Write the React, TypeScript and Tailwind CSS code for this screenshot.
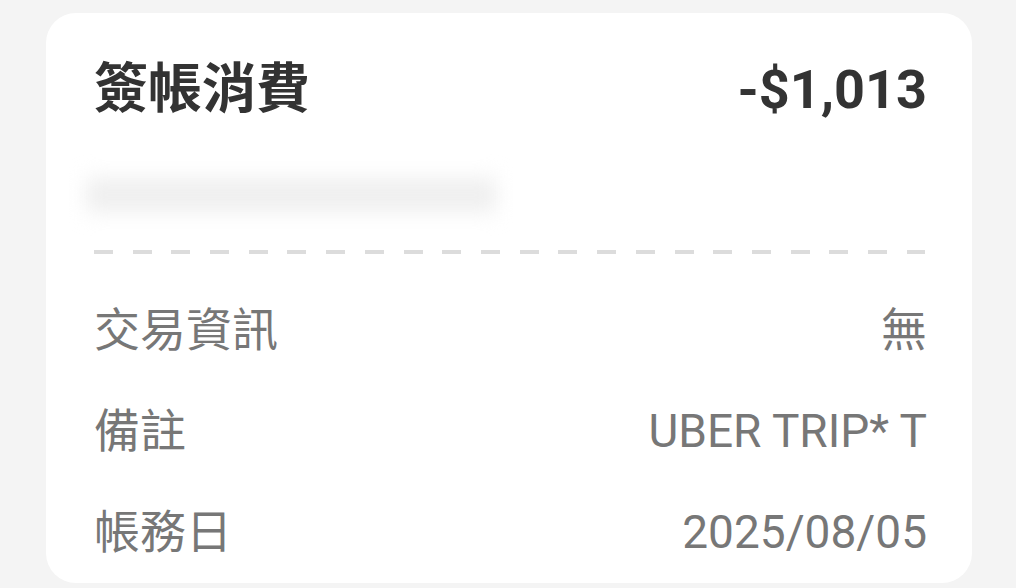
export default function App() {
  const font = { fontFamily: 'Roboto, "Noto Sans CJK TC", sans-serif' };
  return (
    <div className="w-[1016px] h-[588px] bg-[#f4f4f4] pt-[13px] pl-[46px] pr-[44px] overflow-hidden" style={font}>
      <div className="bg-white rounded-[30px] h-[570px] pl-[48px] pr-[45px] pt-[41px] flex flex-col">
        <div className="flex justify-between items-center h-[72px]">
          <div className="text-[54px] font-bold text-[#333333] leading-none">簽帳消費</div>
          <div className="text-[54px] font-bold text-[#333333] leading-none">-$1,013</div>
        </div>
        <div className="mt-[52px] -ml-[8px] w-[410px] h-[34px] bg-[#efefef] blur-[10px]" />
        <div className="mt-[38px] mr-[2px] h-[4px] bg-[repeating-linear-gradient(to_right,#dcdcdc_0_19px,transparent_19px_38.7px)]" />
        <div className="mt-[53px] flex flex-col gap-[55px] text-[46px] text-[#777777] leading-none">
          <div className="flex justify-between items-center h-[46px]">
            <span>交易資訊</span>
            <span>無</span>
          </div>
          <div className="flex justify-between items-center h-[46px]">
            <span>備註</span>
            <span>UBER TRIP* T</span>
          </div>
          <div className="flex justify-between items-center h-[46px]">
            <span>帳務日</span>
            <span>2025/08/05</span>
          </div>
        </div>
      </div>
    </div>
  );
}
